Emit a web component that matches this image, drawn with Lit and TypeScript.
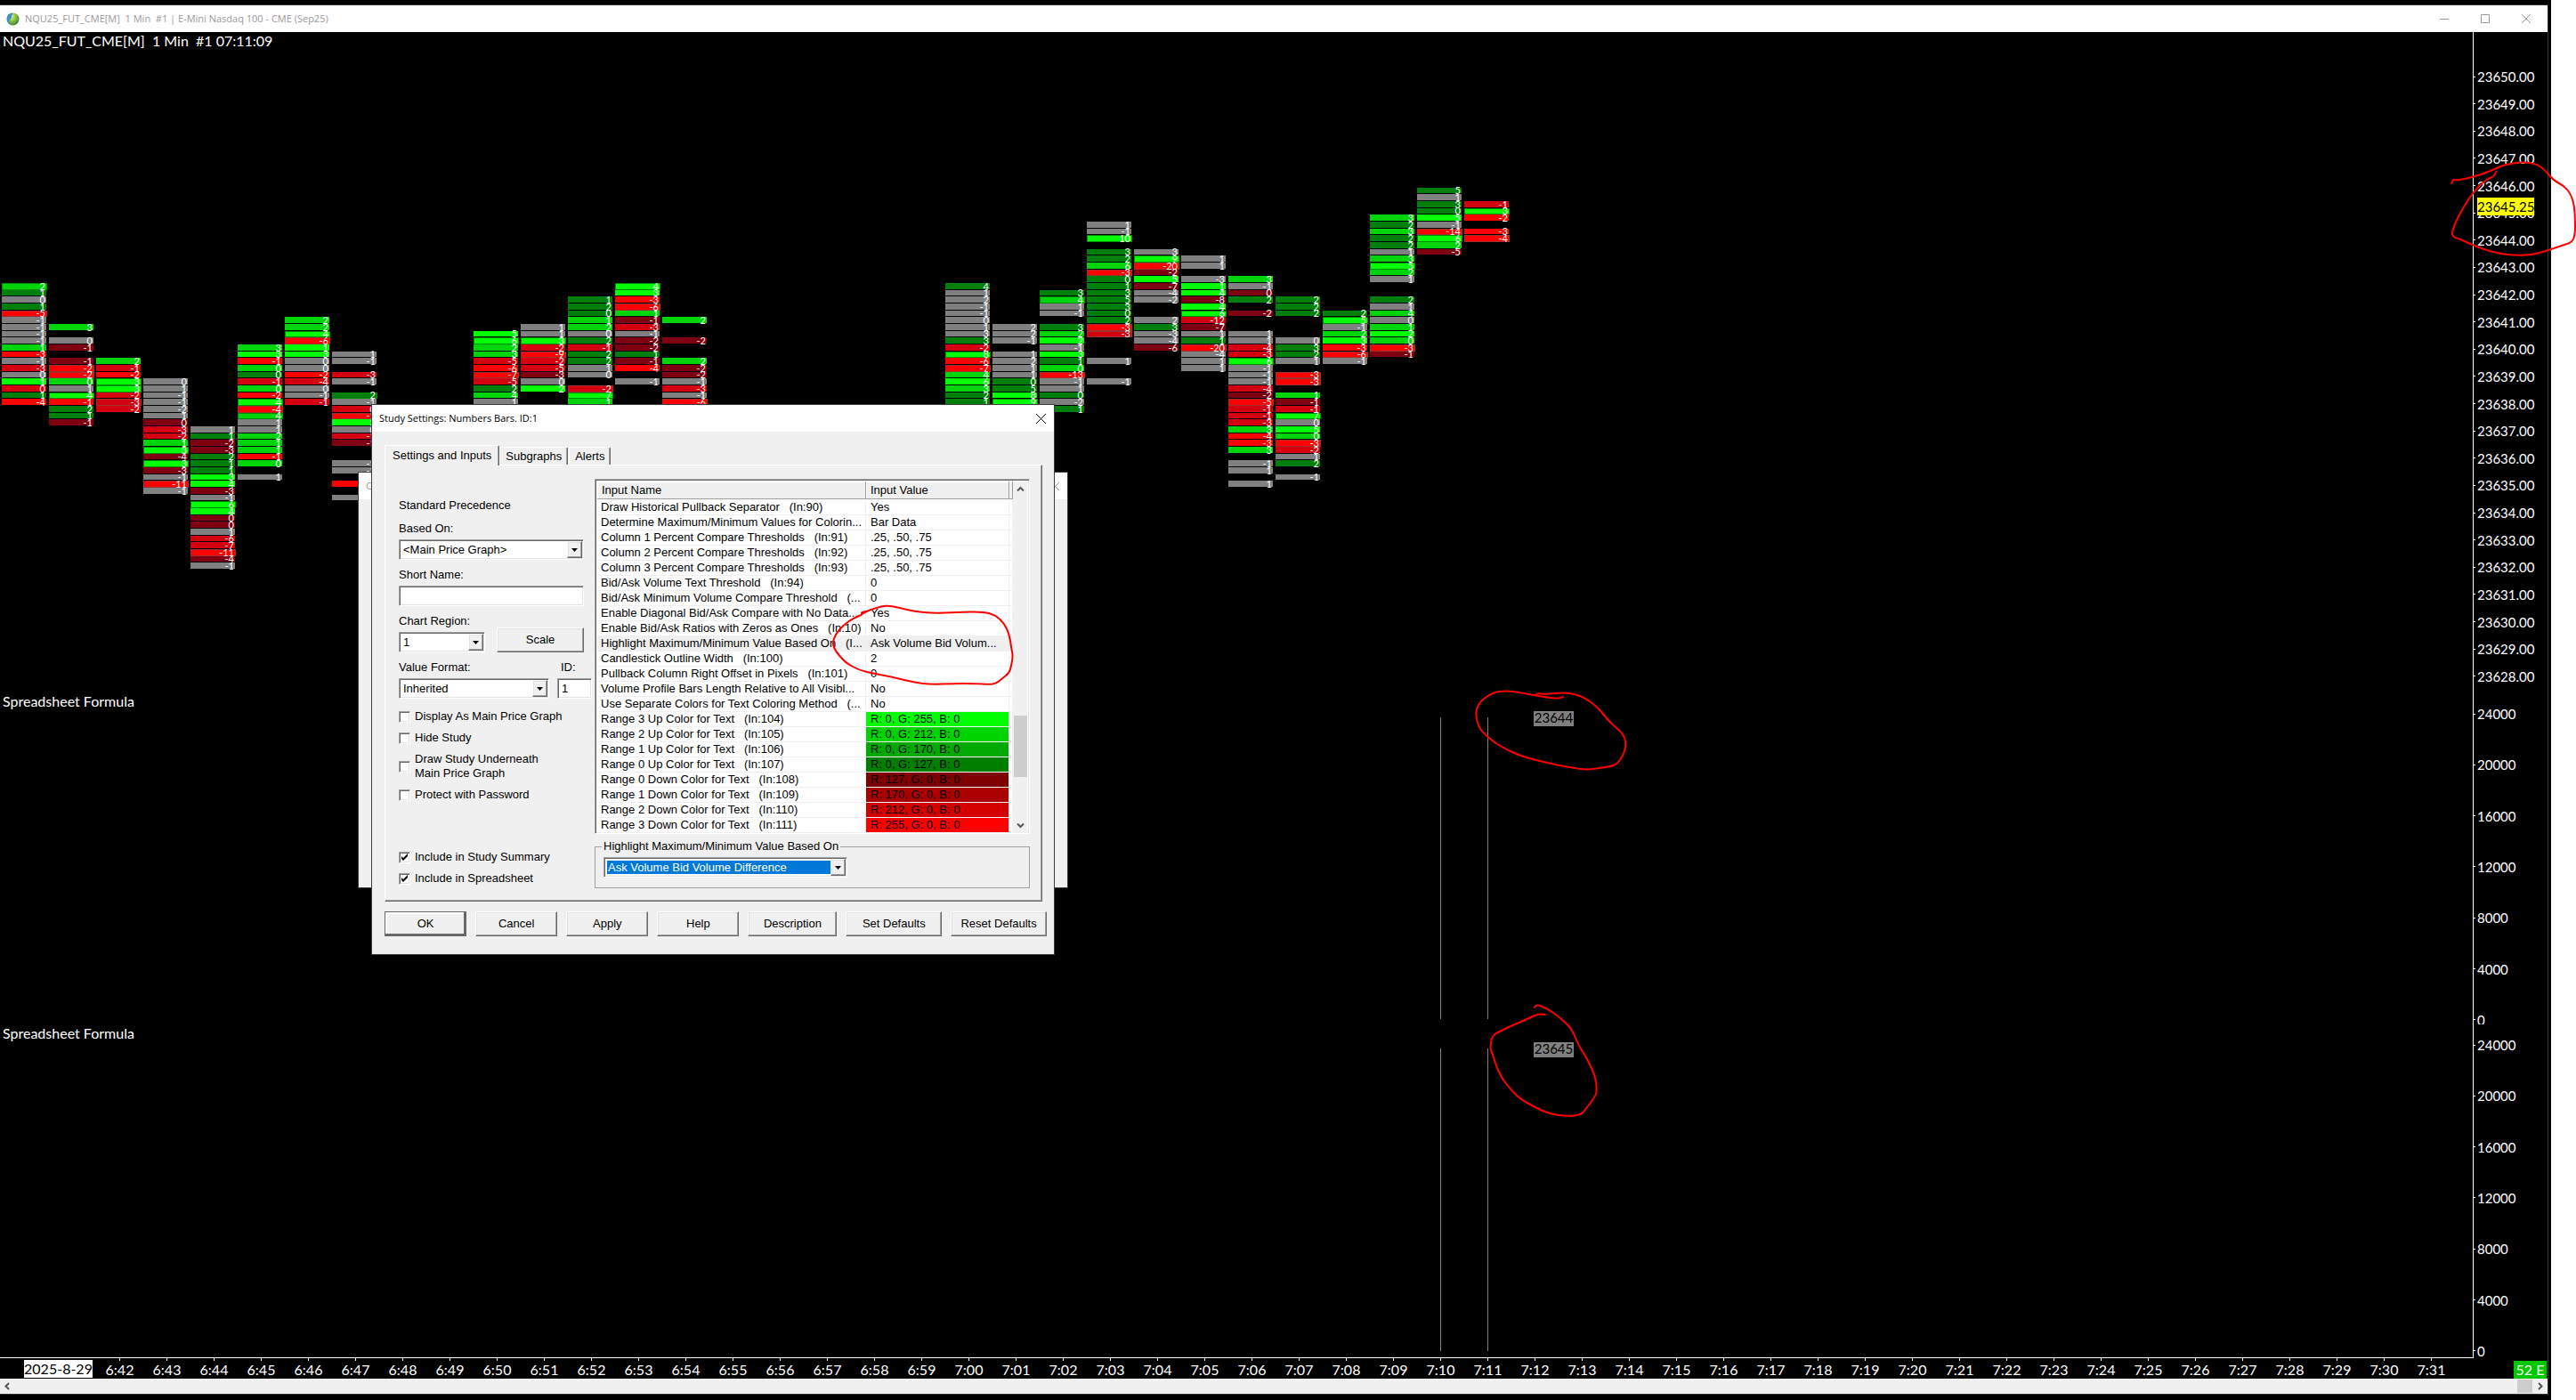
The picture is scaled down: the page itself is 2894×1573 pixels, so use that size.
import { LitElement, html, svg, css } from "lit";
import { customElement } from "lit/decorators.js";
import { classMap } from "lit/directives/class-map.js";

/* ---------- chart data ---------- */

const COLUMN_PITCH = 53;
const ROW_PITCH = 7.662;
const FIRST_ROW_Y = 44.5;

// Each column: [column index, first row, cells]. A cell is a shade letter, the
// volume difference and an optional * for a highlighted extreme; "." is a gap.
const COLUMNS: [number, number, string][] = [
  [0, 31, "m2* d1 x0 d1 t-5* x-1 x-1 x-1 x-1 m1 t-3 x-1 s-3 x0 b1 s0 d1 t-4"],
  [1, 37, "m3 . x0 r-1 . r-1 t-2* t-2* m0 x1 b4* t-1 d2 d1 r-1"],
  [2, 42, "m2 s-1 t-2 b3* b3* s-2 s-3* s-2"],
  [3, 45, "x0 x1 x-1 x-1 x-2 x1 r0 s-3 s-2 m1 b3* r-4 b3* r-3 x-1 t-11* x-1"],
  [4, 52, "x1 d1 r-2 r-3 d2 d1 d1 b3 b4 r-3 x-1 b6* b4 r0 r0 x1 s-6 s-7 t-11* r-4 x-1"],
  [5, 40, "m3 b3 t-1 m0 d0 s-1 m0 t-2 b4* t-4* m4* x1 x1 m2 m1 m1 t-1 m0 . x1"],
  [6, 36, "m2 m2 b4* t-6* b1 b3 x0 x0 t-2 s-4 x0 x-1 s-1"],
  [7, 41, "x1 x-1 . s-3 x-1 . d2* x-1 s0 t-1* b3 x0 s-1 r-1 . . x-1 x-1 . t-2 . x1"],
  [10, 38, "b5 b6* m2 m3 s-5 t-6 t-7* s-5 d2 m4 x1"],
  [11, 37, "x1 x1 b3* s-2 t-9* s-2 s-5 r-3 x0 b2"],
  [12, 33, "d1 d2 d0 m1 m2 x0 d2 s-1 d2 d2 x1 x0 . s-2* b7* m1"],
  [13, 31, "b4* b3 t-3 t-6* m1 r-1 s-3 x-1 r-2 r-2 d1 r-1 t-4 . x-1"],
  [14, 36, "m2 . . r-2 . . m2 r-2 r-2 x-1 s-3 x-1 t-6*"],
  [20, 31, "d4 x1 x2 x-1 x-1 x0 x1 x3 d3 s-2 b8* t-6 t-7* m4 b6 m3 d2 d1"],
  [21, 37, "x2 x2 x-1 . x1 x2 x1 x1 d0 d5 b8 b9*"],
  [22, 32, "d3 m4* x1 x-1 . d3 m2 b2 x-1 b3 d1 m0 t-13* x-1 x1 d0 x-2 d1"],
  [23, 22, "x1 x-1 b10* . d3 d2 m6 t-3* d0 d1 d3 d5 d3 d0 d2 t-3* s-3* . . . x1 . . x-1"],
  [24, 26, "x3 b9* t-20* r-2 b5 r-7 x-4 x-2 . . x2 d3 x-3 x-4 r-6"],
  [25, 27, "x1 x1 . x-3 b1 b4 r-8 b4 b6* s-12 r-7 x1 d1 t-20* x-4 x1 x1"],
  [26, 30, "m3 x-1 r0 d2 . r-2 . . x1 x1 s-4 s-3 b6* x-1 x-1 x-1 s-4 r-2 t-5* s-1 s-1 s-3 m3 t-4 t-3 m3 . x-1 x1 . x1"],
  [27, 33, "d2 d2 d2 . . . x0 d3 d2 x1 . t-3* t-3* . m1 r-1 s-1 b7* x0 b5 m0 t-3* s-2 x1 d2 . x-1"],
  [28, 35, "d2 b5* x-1 m2 b3 t-3 t-6* x-1"],
  [29, 21, "m3 d2 m3 d2 d2 x1 m3 b5* m2 x1 . . d2 x1 m4 x0 m1 b2 m0 t-3* r-1"],
  [30, 17, "d5 x1 d3 d0 b5 x-1 t-14* b6* m2 r-5"],
  [31, 19, "s-1 b3* t-2 . t-3 t-4*"],
];

const PRICES = Array.from({ length: 23 }, (_, i) => (23650 - i).toFixed(2));
const VALUES = ["24000", "20000", "16000", "12000", "8000", "4000", "0"];
const TIMES = Array.from({ length: 50 }, (_, i) => {
  const m = 42 + i;
  return `${6 + Math.floor(m / 60)}:${String(m % 60).padStart(2, "0")}`;
});

const LAST_PRICE = 23645.25;

/* ---------- dialog data ---------- */

const INPUTS: { name: string; value: string; color?: string; selected?: boolean }[] = [
  { name: "Draw Historical Pullback Separator   (In:90)", value: "Yes" },
  { name: "Determine Maximum/Minimum Values for Colorin...", value: "Bar Data" },
  { name: "Column 1 Percent Compare Thresholds   (In:91)", value: ".25, .50, .75" },
  { name: "Column 2 Percent Compare Thresholds   (In:92)", value: ".25, .50, .75" },
  { name: "Column 3 Percent Compare Thresholds   (In:93)", value: ".25, .50, .75" },
  { name: "Bid/Ask Volume Text Threshold   (In:94)", value: "0" },
  { name: "Bid/Ask Minimum Volume Compare Threshold   (...", value: "0" },
  { name: "Enable Diagonal Bid/Ask Compare with No Data...", value: "Yes" },
  { name: "Enable Bid/Ask Ratios with Zeros as Ones   (In:10)", value: "No" },
  { name: "Highlight Maximum/Minimum Value Based On   (I...", value: "Ask Volume Bid Volum...", selected: true },
  { name: "Candlestick Outline Width   (In:100)", value: "2" },
  { name: "Pullback Column Right Offset in Pixels   (In:101)", value: "0" },
  { name: "Volume Profile Bars Length Relative to All Visibl...", value: "No" },
  { name: "Use Separate Colors for Text Coloring Method   (...", value: "No" },
  { name: "Range 3 Up Color for Text   (In:104)", value: "R: 0, G: 255, B: 0", color: "rgb(0,255,0)" },
  { name: "Range 2 Up Color for Text   (In:105)", value: "R: 0, G: 212, B: 0", color: "rgb(0,212,0)" },
  { name: "Range 1 Up Color for Text   (In:106)", value: "R: 0, G: 170, B: 0", color: "rgb(0,170,0)" },
  { name: "Range 0 Up Color for Text   (In:107)", value: "R: 0, G: 127, B: 0", color: "rgb(0,127,0)" },
  { name: "Range 0 Down Color for Text   (In:108)", value: "R: 127, G: 0, B: 0", color: "rgb(127,0,0)" },
  { name: "Range 1 Down Color for Text   (In:109)", value: "R: 170, G: 0, B: 0", color: "rgb(170,0,0)" },
  { name: "Range 2 Down Color for Text   (In:110)", value: "R: 212, G: 0, B: 0", color: "rgb(212,0,0)" },
  { name: "Range 3 Down Color for Text   (In:111)", value: "R: 255, G: 0, B: 0", color: "rgb(255,0,0)" },
];

/* ---------- hand-drawn marks ---------- */

type Pt = [number, number];

const MARKS: Pt[][] = [
  [[2754, 206], [2756, 201], [2759, 203], [2778, 199], [2796, 193], [2813, 185], [2833, 182], [2849, 184], [2858, 190], [2869, 203], [2881, 209], [2888, 218], [2892, 230], [2893, 248], [2893, 263], [2890, 272], [2878, 276], [2863, 281], [2847, 286], [2827, 287], [2807, 285], [2787, 279], [2773, 273], [2762, 268], [2757, 267], [2754, 262], [2759, 249], [2768, 232], [2778, 217], [2787, 207], [2795, 201], [2802, 198], [2804, 193]],
  [[968, 690], [973, 687], [984, 683], [996, 680], [1011, 683], [1027, 687], [1049, 689], [1074, 688], [1104, 687], [1118, 691], [1128, 700], [1134, 713], [1136, 727], [1138, 737], [1136, 748], [1134, 756], [1125, 763], [1119, 768], [1112, 769], [1095, 768], [1070, 768], [1046, 769], [1028, 767], [1004, 761], [983, 757], [965, 753], [951, 745], [946, 740], [939, 732], [935, 723], [939, 712], [948, 702], [958, 695], [970, 690], [967, 688], [973, 687]],
  [[1756, 783], [1753, 785], [1740, 784], [1723, 781], [1707, 778], [1692, 776], [1677, 778], [1663, 788], [1659, 796], [1658, 804], [1661, 816], [1666, 823], [1677, 833], [1692, 842], [1708, 849], [1725, 854], [1747, 859], [1763, 862], [1782, 865], [1797, 863], [1810, 861], [1817, 858], [1823, 850], [1827, 838], [1825, 828], [1820, 821], [1810, 813], [1800, 801], [1793, 793], [1780, 784], [1770, 780], [1757, 778], [1737, 780], [1726, 779], [1726, 781]],
  [[1724, 1132], [1725, 1128], [1738, 1133], [1752, 1143], [1763, 1153], [1768, 1161], [1773, 1174], [1782, 1188], [1787, 1198], [1792, 1209], [1794, 1223], [1793, 1231], [1783, 1244], [1776, 1253], [1760, 1254], [1743, 1252], [1728, 1246], [1708, 1235], [1697, 1224], [1687, 1211], [1681, 1198], [1677, 1185], [1674, 1178], [1676, 1165], [1682, 1160], [1697, 1153], [1718, 1144], [1728, 1139], [1736, 1140]],
];

function smoothPath(points: Pt[]): string {
  let d = `M${points[0][0]} ${points[0][1]}`;
  for (let i = 1; i < points.length - 1; i++) {
    const [x, y] = points[i];
    const [nx, ny] = points[i + 1];
    d += `Q${x} ${y} ${(x + nx) / 2} ${(y + ny) / 2}`;
  }
  const last = points[points.length - 1];
  return `${d}L${last[0]} ${last[1]}`;
}

/* ---------- chart ---------- */

@customElement("numbers-chart")
export class NumbersChart extends LitElement {
  static styles = css`
    :host {
      display: grid;
      grid-template-rows: 742fr 373fr 374fr;
      min-height: 0;
      color: #fff;
      font: 15px/20px Lato, sans-serif;
    }
    .panel {
      display: grid;
      grid-template-columns: minmax(0, 1fr) 84px;
      min-height: 0;
      overflow: hidden;
    }
    .plot {
      position: relative;
      padding: 0 3px;
      overflow: hidden;
    }
    .caption {
      margin: 0;
      font: inherit;
      font-size: 16px;
      white-space: pre;
    }
    .drawing {
      position: absolute;
      inset: 0;
      width: 100%;
      height: 100%;
    }
    .axis {
      border-left: 1px solid #fff;
      display: flex;
      box-sizing: border-box;
    }
    .price { padding: 50px 0 18px; }
    .upper { padding: 24px 0 5px; }
    .lower { padding: 23px 0 7px; }
    .scale {
      position: relative;
      flex: 1;
      display: flex;
      flex-direction: column;
      justify-content: space-between;
      margin: 0;
      padding: 0;
      list-style: none;
    }
    .mark {
      height: 0;
      display: flex;
      align-items: center;
      gap: 2px;
    }
    .mark::before {
      content: "";
      width: 2px;
      height: 1px;
      background: #fff;
    }
    .last {
      position: absolute;
      left: 4px;
      height: 20px;
      margin-top: -10px;
      background: #ff0;
      color: #000;
    }
    .num {
      font-size: 11px;
      fill: #fff;
      text-anchor: end;
    }
    .x { fill: #808080; }
    .d { fill: #007f0a; }
    .m { fill: #00d40a; }
    .b { fill: #00ff00; }
    .r { fill: #7f0010; }
    .s { fill: #d40010; }
    .t { fill: #ff0000; }
    .up { stroke: #008a00; }
    .down { stroke: #a03030; }
    .bar { stroke: #808080; }
    .chip { fill: #808080; }
    .chiptext { fill: #000; text-anchor: middle; }
  `;

  private cells() {
    return COLUMNS.map(([col, start, cells]) =>
      cells.split(" ").map((cell, i) => {
        if (cell === ".") return null;
        const hot = cell.endsWith("*");
        const shade = cell[0];
        const value = cell.slice(1).replace("*", "");
        const x = 2 + col * COLUMN_PITCH;
        const top = Math.round(FIRST_ROW_Y + (start + i) * ROW_PITCH);
        const next = Math.round(FIRST_ROW_Y + (start + i + 1) * ROW_PITCH);
        const edge = value.startsWith("-") ? "down" : "up";
        return svg`
          ${hot
            ? svg`<rect class="${shade} ${edge}" x=${x + 0.5} y=${top + 0.5} width="50" height=${next - top - 1}></rect>`
            : svg`<rect class=${shade} x=${x} y=${top} width="50" height=${next - top - 1}></rect>`}
          <text class="num" x=${x + 49} y=${next}>${value}</text>`;
      })
    );
  }

  private axis(kind: string, labels: string[], last?: number) {
    return html`
      <div class="axis ${kind}">
        <ul class="scale">
          ${labels.map((l) => html`<li class="mark">${l}</li>`)}
          ${last
            ? html`<li class="last" style="top:${((23650 - last) / 22) * 100}%">${last.toFixed(2)}</li>`
            : null}
        </ul>
      </div>`;
  }

  private study(kind: string, value: string, y1: number, y2: number) {
    return html`
      <section class="panel">
        <div class="plot">
          <h2 class="caption">Spreadsheet Formula</h2>
          <svg class="drawing">
            <line class="bar" x1="1618.5" x2="1618.5" y1=${y1} y2=${y2}></line>
            <line class="bar" x1="1671.5" x2="1671.5" y1=${y1} y2=${y2}></line>
            <rect class="chip" x="1723" y=${y1 - 7} width="45" height="17"></rect>
            <text class="chiptext" x="1745.5" y=${y1 + 6}>${value}</text>
          </svg>
        </div>
        ${this.axis(kind, VALUES)}
      </section>`;
  }

  render() {
    return html`
      <section class="panel">
        <div class="plot">
          <h1 class="caption">NQU25_FUT_CME[M]  1 Min  #1 07:11:09</h1>
          <svg class="drawing">${this.cells()}</svg>
        </div>
        ${this.axis("price", PRICES, LAST_PRICE)}
      </section>
      ${this.study("upper", "23644", 28, 367)}
      ${this.study("lower", "23645", 27, 367)}
    `;
  }
}

/* ---------- study settings dialog ---------- */

@customElement("study-settings")
export class StudySettings extends LitElement {
  static styles = css`
    :host {
      display: block;
      width: 766px;
      box-sizing: border-box;
      background: #f0f0f0;
      color: #000;
      font: 13px/16px "Liberation Sans", Arial, sans-serif;
      box-shadow: 0 0 0 1px #3c3c3c;
    }
    button, input, select { font: inherit; color: inherit; }
    .title {
      display: flex;
      justify-content: space-between;
      align-items: center;
      height: 30px;
      padding: 0 8px;
      background: #fff;
      font: 11px/16px "Open Sans", "Noto Sans", sans-serif;
    }
    .close {
      display: flex;
      border: 0;
      padding: 0;
      background: none;
    }
    .body { padding: 15px 8px 20px 14px; }
    .tabs { display: flex; align-items: flex-end; }
    .tab {
      height: 20px;
      padding: 0 6px;
      margin-right: 1px;
      background: #f0f0f0;
      border: 1px solid;
      border-color: #fff #696969 transparent #fff;
      border-bottom: 0;
      border-radius: 2px 2px 0 0;
      box-shadow: inset -1px 0 #a0a0a0;
      white-space: nowrap;
    }
    .current {
      height: 23px;
      padding: 0 8px;
      margin-right: 0;
      position: relative;
      margin-bottom: -1px;
      border-left-color: #fff;
    }
    .page {
      display: grid;
      grid-template-columns: 208px minmax(0, 1fr);
      column-gap: 12px;
      height: 491px;
      margin-right: 5px;
      box-sizing: border-box;
      padding: 15px 13px 14px 15px;
      border: 1px solid;
      border-color: #fff #696969 #696969 #fff;
      box-shadow: inset -1px -1px #a0a0a0;
    }
    .left { display: flex; flex-direction: column; }
    .precedence { margin: 22px 0 10px; }
    .field { display: flex; flex-direction: column; gap: 4px; margin-bottom: 9px; }
    .pair { display: flex; align-items: flex-end; gap: 9px; margin-bottom: 0; }
    .pair .field { flex: none; }
    .region { width: 97px; }
    .format { width: 169px; }
    .ident { width: 39px; }
    .ident label { padding-left: 4px; }
    .sunken {
      box-sizing: border-box;
      border: 1px solid;
      border-color: #a0a0a0 #fff #fff #a0a0a0;
      box-shadow: inset 1px 1px #696969, inset -1px -1px #e3e3e3;
      border-radius: 0;
      background: #fff;
      outline: 0;
    }
    .box { width: 100%; height: 23px; padding: 1px 4px; }
    .combo { position: relative; display: flex; }
    .combo select {
      appearance: none;
      width: 100%;
      height: 23px;
      padding: 0 20px 0 4px;
    }
    .drop {
      position: absolute;
      top: 2px;
      right: 2px;
      width: 17px;
      height: 19px;
      box-sizing: border-box;
      pointer-events: none;
    }
    .raised {
      background: #f0f0f0;
      border: 1px solid;
      border-color: #fff #696969 #696969 #fff;
      box-shadow: inset -1px -1px #a0a0a0, inset 1px 1px #e3e3e3;
      border-radius: 0;
    }
    .push { height: 28px; padding: 0; box-sizing: border-box; white-space: nowrap; }
    .scale { width: 98px; margin: 0 0 9px 4px; }
    .check {
      display: flex;
      align-items: center;
      gap: 5px;
      margin-top: 8px;
    }
    .check input {
      appearance: none;
      width: 13px;
      height: 13px;
      margin: 0;
    }
    .tick { display: grid; }
    .tick > * { grid-area: 1 / 1; }
    .tick svg { pointer-events: none; }
    .checks { margin-top: -5px; }
    .includes { margin-top: auto; padding-bottom: 3px; }
    .right { min-width: 0; display: flex; flex-direction: column; justify-content: space-between; }
    .list {
      display: grid;
      grid-template-columns: minmax(0, 1fr) 16px;
      height: 399px;
      padding: 2px;
      overflow: hidden;
    }
    .inputs {
      width: 100%;
      border-collapse: separate;
      border-spacing: 0;
      table-layout: fixed;
    }
    .c1 { width: 302px; }
    .c2 { width: 161px; }
    .inputs th {
      height: 20px;
      box-sizing: border-box;
      padding: 0 5px;
      background: #f0f0f0;
      border-right: 1px solid #a0a0a0;
      border-bottom: 1px solid #a0a0a0;
      box-shadow: inset 1px 1px #fff;
      font-weight: 400;
      text-align: left;
    }
    .inputs td {
      height: 17px;
      box-sizing: border-box;
      padding: 0 0 0 4px;
      border-right: 1px solid #f0f0f0;
      border-bottom: 1px solid #f0f0f0;
      white-space: pre;
      overflow: hidden;
    }
    .inputs td + td { padding-left: 5px; }
    .inputs thead::after { content: ""; display: block; height: 1px; }
    .selected td { background: #f0f0f0; }
    .bar {
      display: flex;
      flex-direction: column;
      align-items: center;
      background: #f0f0f0;
      box-sizing: border-box;
      padding: 4px 0;
    }
    .thumb { width: 15px; height: 69px; margin: 250px 0 auto; background: #cdcdcd; }
    .group {
      height: 55px;
      box-sizing: border-box;
      margin: 0;
      padding: 4px 9px 0;
      border: 1px solid #a0a0a0;
      box-shadow: none;
      min-width: 0;
    }
    .group legend { padding: 0 2px; margin-left: -2px; }
    .wide { width: 274px; }
    .wide select { padding: 0 18px 0 4px; color: #fff; }
    .wide .sunken { background: #0078d7; box-shadow: inset 1px 1px #696969, inset -1px -1px #e3e3e3, inset 0 0 0 3px #fff; }
    .actions { display: flex; gap: 10px; margin-top: 11px; }
    .w1 { flex: 92 1 0; }
    .w2 { flex: 100 1 0; }
    .w3 { flex: 108 1 0; }
    .default { outline: 1px solid #696969; outline-offset: -1px; box-shadow: inset -2px -2px #696969, inset 2px 2px #fff; }
  `;

  private combo(id: string, text: string, extra = "") {
    return html`
      <span class="combo ${extra}">
        <select id=${id} class="sunken" aria-label=${text}>
          <option>${text}</option>
        </select>
        <svg class="drop raised" viewBox="0 0 15 17"><path d="M4 7h7l-3.500 4z" fill="#000"></path></svg>
      </span>`;
  }

  private check(id: string, text: unknown, checked = false) {
    return html`
      <div class="check">
        <span class="tick">
          <input id=${id} type="checkbox" class="sunken" .checked=${checked} />
          ${checked
            ? html`<svg width="13" height="13"><path d="M3 5v3l2 2 5-5V2L5 7z" fill="#000"></path></svg>`
            : null}
        </span>
        <label for=${id}>${text}</label>
      </div>`;
  }

  render() {
    return html`
      <div class="title">
        <span>Study Settings: Numbers Bars. ID:1</span>
        <button class="close" aria-label="Close">
          <svg width="13" height="13"><path d="M1 1l11 11M12 1L1 12" stroke="#000" fill="none"></path></svg>
        </button>
      </div>
      <div class="body">
        <div class="tabs" role="tablist">
          <button class="tab current" role="tab" aria-selected="true">Settings and Inputs</button>
          <button class="tab" role="tab">Subgraphs</button>
          <button class="tab" role="tab">Alerts</button>
        </div>
        <div class="page">
          <div class="left">
            <div class="precedence">Standard Precedence</div>
            <div class="field">
              <label for="based">Based On:</label>
              ${this.combo("based", "<Main Price Graph>")}
            </div>
            <div class="field">
              <label for="short">Short Name:</label>
              <input id="short" class="sunken box" />
            </div>
            <div class="pair">
              <div class="field region">
                <label for="region">Chart Region:</label>
                ${this.combo("region", "1")}
              </div>
              <button class="push raised scale">Scale</button>
            </div>
            <div class="pair">
              <div class="field format">
                <label for="format">Value Format:</label>
                ${this.combo("format", "Inherited")}
              </div>
              <div class="field ident">
                <label for="ident">ID:</label>
                <input id="ident" class="sunken box" .value=${"1"} />
              </div>
            </div>
            <div class="checks">
              ${this.check("main", "Display As Main Price Graph")}
              ${this.check("hide", "Hide Study")}
              ${this.check("under", html`Draw Study Underneath<br />Main Price Graph`)}
              ${this.check("protect", "Protect with Password")}
            </div>
            <div class="includes">
              ${this.check("summary", "Include in Study Summary", true)}
              ${this.check("sheet", "Include in Spreadsheet", true)}
            </div>
          </div>
          <div class="right">
            <div class="list sunken">
              <table class="inputs">
                <colgroup><col class="c1" /><col class="c2" /><col /></colgroup>
                <thead><tr><th>Input Name</th><th>Input Value</th><th></th></tr></thead>
                <tbody>
                  ${INPUTS.map(
                    (r) => html`<tr class=${classMap({ selected: !!r.selected })}><td>${r.name}</td><td style=${r.color ? `background:${r.color}` : ""}>${r.value}</td><td></td></tr>`
                  )}
                </tbody>
              </table>
              <div class="bar">
                <svg width="9" height="9"><path d="M1 6.500l3.500-3.500 3.500 3.500" stroke="#555" stroke-width="2" fill="none"></path></svg>
                <div class="thumb"></div>
                <svg width="9" height="9"><path d="M1 2.500l3.500 3.500 3.500-3.500" stroke="#555" stroke-width="2" fill="none"></path></svg>
              </div>
            </div>
            <fieldset class="group">
              <legend>Highlight Maximum/Minimum Value Based On</legend>
              ${this.combo("basis", "Ask Volume Bid Volume Difference", "wide")}
            </fieldset>
          </div>
        </div>
        <div class="actions">
          <button class="push raised w1 default">OK</button>
          <button class="push raised w1">Cancel</button>
          <button class="push raised w1">Apply</button>
          <button class="push raised w1">Help</button>
          <button class="push raised w2">Description</button>
          <button class="push raised w3">Set Defaults</button>
          <button class="push raised w3">Reset Defaults</button>
        </div>
      </div>
    `;
  }
}

/* ---------- application window ---------- */

@customElement("app-root")
export class AppRoot extends LitElement {
  static styles = css`
    :host {
      display: block;
      position: relative;
      height: 100vh;
      overflow: hidden;
      background: #fff;
      box-sizing: border-box;
      padding-right: 28px;
    }
    .desk {
      height: 100%;
      box-sizing: border-box;
      padding: 5px 3px 6px 0;
      background: #000;
    }
    .frame {
      height: 100%;
      box-sizing: border-box;
      display: grid;
      grid-template-rows: 30px minmax(0, 1fr) 24px 17px;
      border: 1px solid #333;
      border-left: 0;
      background: #000;
    }
    .caption {
      display: flex;
      align-items: center;
      gap: 6px;
      padding: 0 18px 0 7px;
      background: #fff;
      color: #999;
      font: 11px/16px "Open Sans", "Noto Sans", sans-serif;
      white-space: pre;
    }
    .controls { display: flex; gap: 34px; margin-left: auto; }
    .ctl { display: flex; padding: 0; border: 0; background: none; }
    .times {
      display: flex;
      overflow: hidden;
      color: #fff;
      font: 16px/20px Lato, sans-serif;
    }
    .slots {
      flex: 1;
      display: flex;
      min-width: 0;
      border-top: 1px solid #fff;
      margin-right: -1px;
    }
    .date {
      flex: none;
      width: 77px;
      margin: 2px 4px 1px 27px;
      background: #fff;
      color: #000;
      text-align: center;
    }
    .slot {
      flex: none;
      width: 53px;
      display: flex;
      flex-direction: column;
      align-items: center;
    }
    .slot::before { content: ""; width: 1px; height: 3px; background: #fff; }
    .corner {
      width: 84px;
      display: flex;
      justify-content: flex-end;
      padding: 4px 1px 0 0;
      box-sizing: border-box;
    }
    .badge { width: 37px; background: #00c800; text-align: center; }
    .scroll {
      display: flex;
      align-items: center;
      padding: 0 4px;
      background: #f0f0f0;
    }
    .thumb { width: 17px; height: 15px; margin: 0 4px 0 auto; background: #cdcdcd; }
    .behind {
      position: absolute;
      left: 403px;
      top: 531px;
      width: 796px;
      height: 466px;
      background: #f0f0f0;
      box-shadow: 0 0 0 1px #3c3c3c;
    }
    .strip {
      display: flex;
      justify-content: space-between;
      align-items: center;
      height: 30px;
      padding: 0 8px;
      background: #fff;
      color: #999;
      font: 11px/16px "Open Sans", "Noto Sans", sans-serif;
    }
    .dialog { position: absolute; left: 418px; top: 455px; }
    .marks { position: absolute; inset: 0; width: 100%; height: 100%; pointer-events: none; }
    .mark { fill: none; stroke: #f00; stroke-width: 2; stroke-linecap: round; }
  `;

  render() {
    return html`
      <main class="desk">
        <div class="frame">
          <header class="caption"><svg width="15" height="15" viewBox="0 0 15 15"><defs><radialGradient id="globe" cx="0.35" cy="0.3" r="0.8"><stop offset="0" stop-color="#e4f3b0"></stop><stop offset="0.45" stop-color="#8cc63f"></stop><stop offset="1" stop-color="#3a7d1e"></stop></radialGradient></defs><circle cx="7.500" cy="7.500" r="7" fill="url(#globe)"></circle><path d="M1 5C2 2 4 1 7 .6 8 2 6 3 6 5c0 2-1 2-2 3s-1 3 1 6C2 13 0 9 1 5z" fill="#3f8fc4"></path><path d="M10 13c2-1 4-3 4-5-1 2-3 3-4 5z" fill="#2f6fae"></path></svg><span>NQU25_FUT_CME[M]  1 Min  #1 | E-Mini Nasdaq 100 - CME (Sep25)</span><div class="controls"><button class="ctl" aria-label="Minimize"><svg width="12" height="12"><path d="M1 6.500h10" stroke="#999"></path></svg></button><button class="ctl" aria-label="Maximize"><svg width="12" height="12"><path d="M1.500 1.500h9v9h-9z" stroke="#999" fill="none"></path></svg></button><button class="ctl" aria-label="Close window"><svg width="12" height="12"><path d="M1 1l10 10M11 1L1 11" stroke="#999"></path></svg></button></div></header>
          <numbers-chart></numbers-chart>
          <div class="times">
            <div class="slots">
              <span class="date">2025-8-29</span>
              ${TIMES.map((t) => html`<span class="slot">${t}</span>`)}
            </div>
            <div class="corner"><span class="badge">52 E</span></div>
          </div>
          <div class="scroll">
            <svg width="9" height="9"><path d="M6 1L2.500 4.500 6 8" stroke="#555" stroke-width="2" fill="none"></path></svg>
            <div class="thumb"></div>
            <svg width="9" height="9"><path d="M3 1l3.500 3.500L3 8" stroke="#555" stroke-width="2" fill="none"></path></svg>
          </div>
        </div>
      </main>
      <div class="behind">
        <div class="strip">
          <span>C</span>
          <svg width="11" height="11"><path d="M1 1l9 9M10 1L1 10" stroke="#999"></path></svg>
        </div>
      </div>
      <study-settings class="dialog" role="dialog" aria-label="Study Settings"></study-settings>
      <svg class="marks">${MARKS.map((m) => svg`<path class="mark" d=${smoothPath(m)}></path>`)}</svg>
    `;
  }
}
